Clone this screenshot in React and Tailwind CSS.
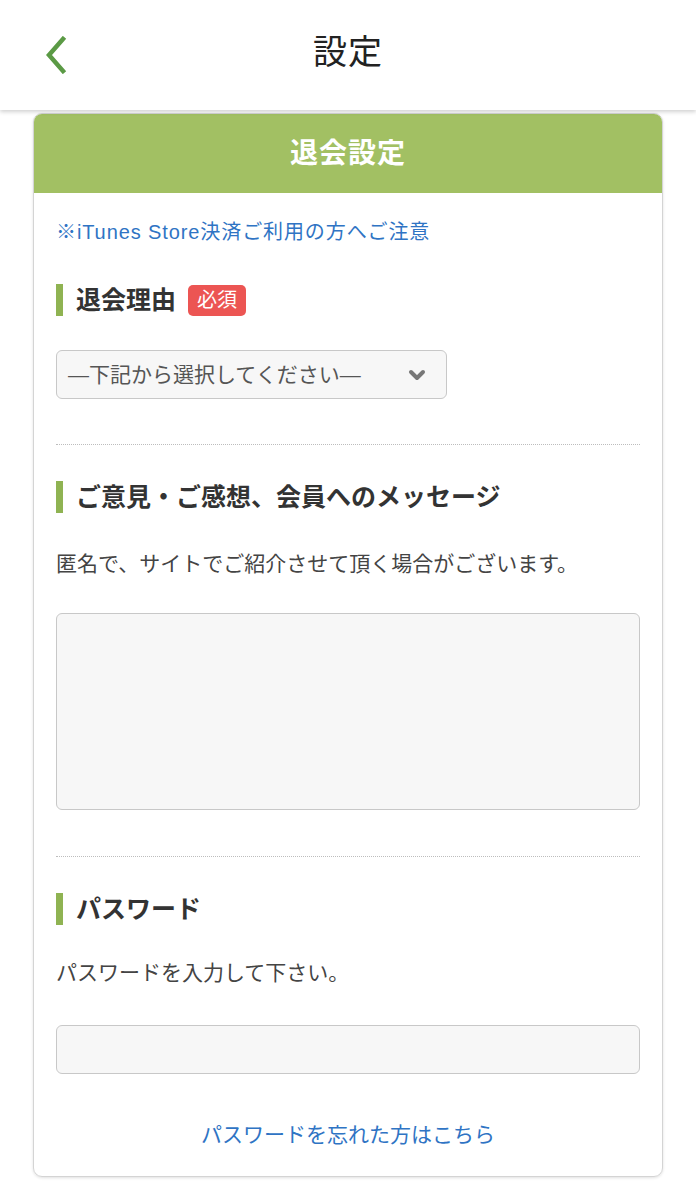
import React from "react";

const FONT = "font-['Liberation_Sans','Noto_Sans_CJK_JP',sans-serif]";

const SectionTitle = ({ children, badge }) => (
  <div className="flex items-center h-[32px]">
    <span className="w-[7px] h-[32px] bg-[#8fb352] shrink-0" />
    <h2 className="ml-[13px] text-[25px] font-bold text-[#333] leading-none">{children}</h2>
    {badge && (
      <span className="ml-[12px] h-[31px] px-[9px] flex items-center rounded-[5px] bg-[#ec5553] text-white text-[20px] leading-none">
        {badge}
      </span>
    )}
  </div>
);

const Divider = () => <div className="border-t border-dotted border-[#bdbdbd]" />;

export default function App() {
  return (
    <div className={`min-h-[1200px] bg-white ${FONT}`}>
      {/* Top bar */}
      <header className="relative z-10 h-[110px] bg-white flex items-center justify-center shadow-[0_2px_4px_rgba(0,0,0,0.18)]">
        <button className="absolute left-[38px] top-[32px] p-1" aria-label="back">
          <svg width="28" height="38" viewBox="0 0 28 38" fill="none">
            <path d="M21 3 L7 19 L21 35" stroke="#5b9a45" strokeWidth="4.5" strokeLinecap="square" />
          </svg>
        </button>
        <h1 className="text-[34px] text-[#222] font-normal tracking-[1px] -mt-[5px]">設定</h1>
      </header>

      {/* Card */}
      <div className="mx-[33px] mt-[3px] mb-[25px] rounded-[9px] border border-[#d4d4d4] shadow-[0_1px_3px_rgba(0,0,0,0.12)] overflow-hidden">
        <div className="h-[79px] bg-[#a2c063] flex items-center justify-center">
          <span className="text-white text-[28px] font-bold tracking-[1px]">退会設定</span>
        </div>

        <div className="px-[22px] pt-[25px] pb-[27px]">
          <a className="block text-[20px] leading-[28px] tracking-[0.9px] text-[#2f74c4]">※iTunes Store決済ご利用の方へご注意</a>

          <div className="mt-[38px]">
            <SectionTitle badge="必須">退会理由</SectionTitle>
          </div>

          <div className="mt-[34px] w-[391px] h-[49px] rounded-[6px] border border-[#c8c8c8] bg-[#f7f7f7] flex items-center justify-between pl-[11px] pr-[20px]">
            <span className="text-[21px] text-[#555]">—下記から選択してください—</span>
            <svg width="18" height="14" viewBox="0 0 18 14">
              <path d="M3 4 L9 10 L15 4" stroke="#777" strokeWidth="4" fill="none" strokeLinecap="round" strokeLinejoin="round" />
            </svg>
          </div>

          <div className="mt-[45px]">
            <Divider />
          </div>

          <div className="mt-[36px]">
            <SectionTitle>ご意見・ご感想、会員へのメッセージ</SectionTitle>
          </div>

          <p className="mt-[37px] text-[21px] leading-[28px] text-[#444]">匿名で、サイトでご紹介させて頂く場合がございます。</p>

          <textarea className="mt-[35px] block w-full h-[197px] rounded-[6px] border border-[#c8c8c8] bg-[#f7f7f7] resize-none outline-none" />

          <div className="mt-[46px]">
            <Divider />
          </div>

          <div className="mt-[36px]">
            <SectionTitle>パスワード</SectionTitle>
          </div>

          <p className="mt-[34px] text-[21px] leading-[28px] text-[#444]">パスワードを入力して下さい。</p>

          <input
            type="password"
            className="mt-[38px] block w-full h-[49px] rounded-[6px] border border-[#c8c8c8] bg-[#f7f7f7] outline-none"
          />

          <a className="mt-[47px] block text-center text-[21px] leading-[28px] text-[#2f74c4]">パスワードを忘れた方はこちら</a>
        </div>
      </div>
    </div>
  );
}
